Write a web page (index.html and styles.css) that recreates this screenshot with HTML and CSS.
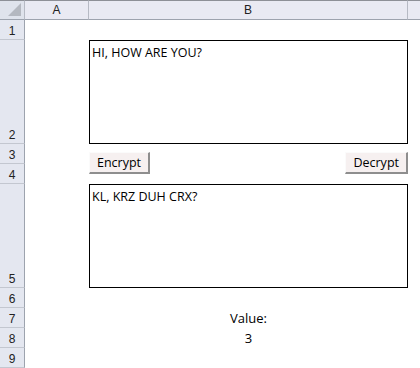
FILE: index.html
```html
<!DOCTYPE html>
<html lang="en">
<head>
    <meta charset="UTF-8">
    <title>Caesar Cipher</title>
    <link rel="stylesheet" href="styles.css">
</head>
<body>

    <div class="sheet">
        <div class="corner"><span class="corner-tri"></span></div>
        <div class="col-head">A</div>
        <div class="col-head">B</div>
        <div class="col-head last"></div>

        <div class="row-head">1</div>
        <div class="cell wide"></div>

        <div class="row-head">2</div>
        <div class="cell"></div>
        <div class="cell"><div class="text-box">HI, HOW ARE YOU?</div></div>
        <div class="cell"></div>

        <div class="row-head">3</div>
        <div class="cell span-rows"></div>
        <div class="cell span-rows buttons">
            <button class="xl-button">Encrypt</button>
            <button class="xl-button">Decrypt</button>
        </div>
        <div class="cell span-rows"></div>
        <div class="row-head">4</div>

        <div class="row-head">5</div>
        <div class="cell"></div>
        <div class="cell"><div class="text-box">KL, KRZ DUH CRX?</div></div>
        <div class="cell"></div>

        <div class="row-head">6</div>
        <div class="cell wide"></div>

        <div class="row-head">7</div>
        <div class="cell"></div>
        <div class="cell centered">Value:</div>
        <div class="cell"></div>

        <div class="row-head">8</div>
        <div class="cell"></div>
        <div class="cell centered">3</div>
        <div class="cell"></div>

        <div class="row-head">9</div>
        <div class="cell wide"></div>
    </div>

</body>
</html>
```

FILE: styles.css
```css
body {
    margin: 0;
    background: #ffffff;
    font-family: "Open Sans", "Liberation Sans", sans-serif;
    font-size: 11px;
    color: #000000;
}
.sheet {
    display: grid;
    grid-template-columns: 25px 64px 319px 1fr;
    grid-template-rows: 20px 20px 104px 20px 20px 104px 20px 20px 20px 20px;
    width: 420px;
    height: 368px;
    overflow: hidden;
}
.corner {
    position: relative;
    background: #dfe3ec;
    border-top: 1px solid #8d9097;
    border-right: 1px solid #b6bac4;
    border-bottom: 1px solid #9da3ae;
}
.corner-tri {
    position: absolute;
    right: 3px;
    bottom: 3px;
    width: 0;
    height: 0;
    border-left: 13px solid transparent;
    border-bottom: 13px solid #b4b8c0;
}
.col-head {
    display: flex;
    align-items: center;
    justify-content: center;
    background: #e9eaf3;
    border-top: 1px solid #8d9097;
    border-right: 1px solid #b6bac4;
    border-bottom: 1px solid #9da3ae;
    font-family: "Liberation Sans", sans-serif;
    font-size: 12px;
    color: #222;
}
.col-head.last {
    border-right: none;
}
.row-head {
    grid-column: 1;
    display: flex;
    align-items: flex-end;
    justify-content: center;
    padding-bottom: 1px;
    background: #e4e7f0;
    border-right: 1px solid #9da3ae;
    border-bottom: 1px solid #c3c7d0;
    font-family: "Liberation Sans", sans-serif;
    font-size: 12px;
    color: #222;
}
.cell.wide {
    grid-column: 2 / 5;
}
.span-rows {
    grid-row: span 2;
}
.text-box {
    height: 100%;
    box-sizing: border-box;
    border: 1px solid #000;
    padding: 4px 2px;
    font-size: 12.5px;
    line-height: 15px;
}
.buttons {
    display: flex;
    justify-content: space-between;
    align-items: center;
    padding-bottom: 3px;
}
.xl-button {
    height: 22px;
    padding: 0 7px;
    background: #f6f0f0;
    border: none;
    border-right: 2px solid #8e8e8e;
    border-bottom: 2px solid #8e8e8e;
    border-top: 1px solid #fbfbfb;
    border-left: 1px solid #fbfbfb;
    font-family: "Open Sans", "Liberation Sans", sans-serif;
    font-size: 12.5px;
    color: #000;
}
.centered {
    display: flex;
    align-items: flex-end;
    justify-content: center;
    padding-bottom: 1px;
    font-size: 13px;
}
```
